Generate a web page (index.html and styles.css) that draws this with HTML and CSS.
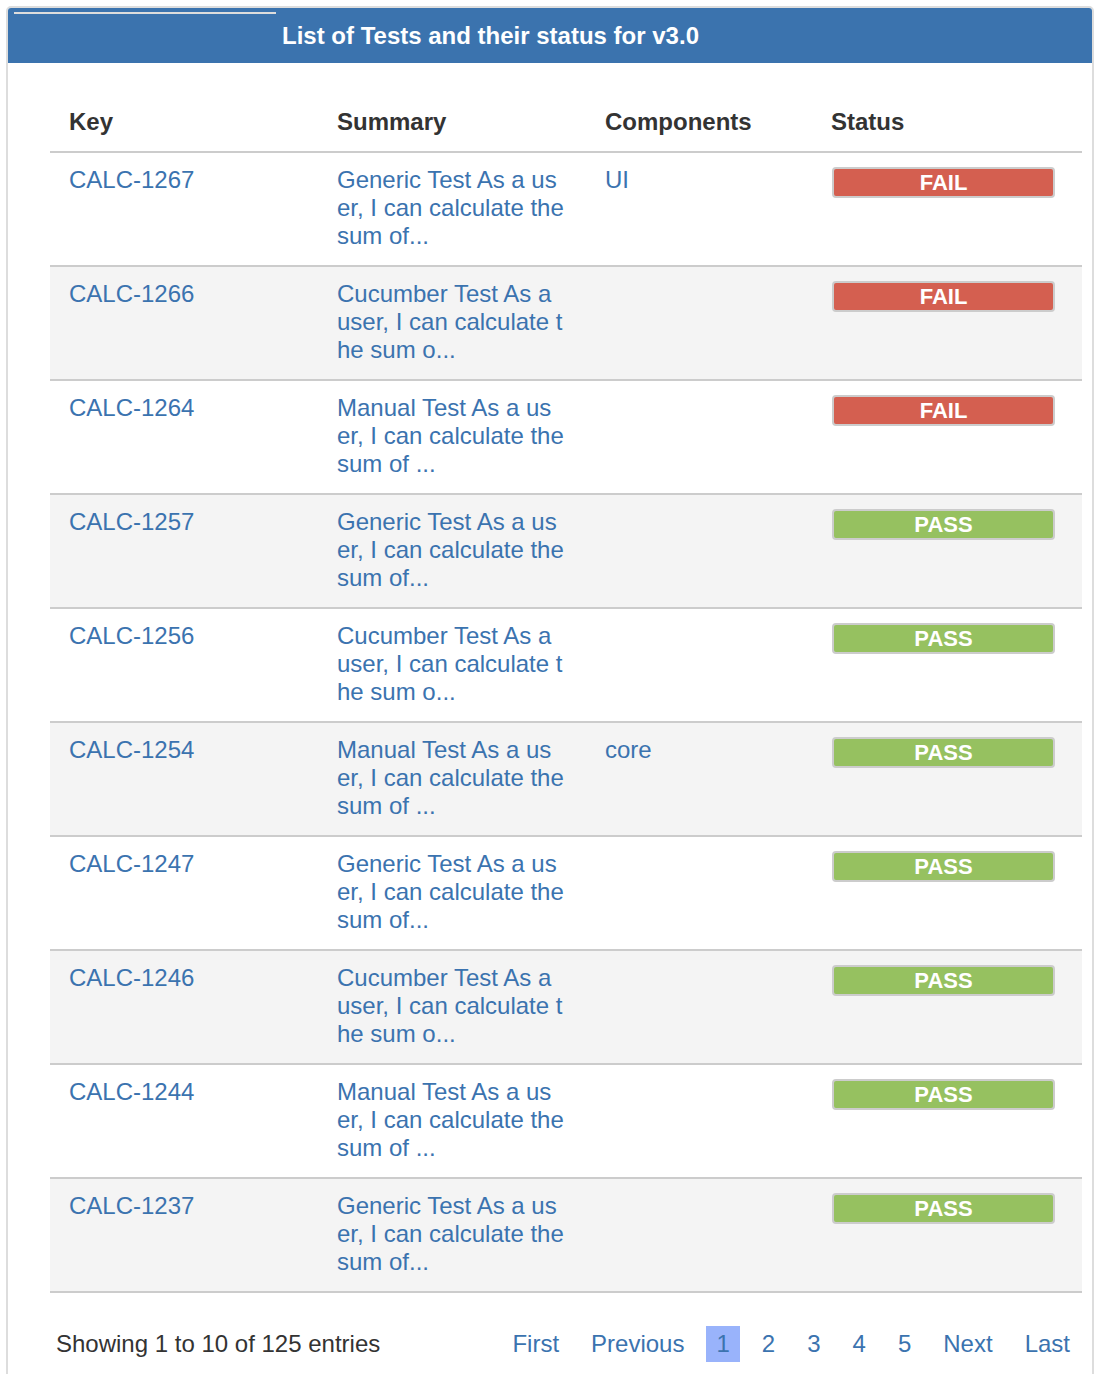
FILE: index.html
```html
<!DOCTYPE html>
<html lang="en">
<head>
<meta charset="utf-8">
<title>List of Tests and their status for v3.0</title>
<link rel="stylesheet" href="styles.css">
</head>
<body>
<div class="panel">
  <div class="panel-header">
    <span class="header-rule"></span>
    <h1 class="panel-title">List of Tests and their status for v3.0</h1>
  </div>
  <div class="panel-body">
    <table class="tests">
      <colgroup>
        <col class="col-key">
        <col class="col-summary">
        <col class="col-comp">
        <col class="col-status">
      </colgroup>
      <thead>
        <tr><th>Key</th><th>Summary</th><th>Components</th><th>Status</th></tr>
      </thead>
      <tbody>
        <tr><td><a href="#">CALC-1267</a></td><td class="summary"><a href="#">Generic Test As a user, I can calculate the sum of...</a></td><td><a href="#">UI</a></td><td><span class="badge fail">FAIL</span></td></tr>
        <tr><td><a href="#">CALC-1266</a></td><td class="summary"><a href="#">Cucumber Test As a user, I can calculate the sum o...</a></td><td></td><td><span class="badge fail">FAIL</span></td></tr>
        <tr><td><a href="#">CALC-1264</a></td><td class="summary"><a href="#">Manual Test As a user, I can calculate the sum of ...</a></td><td></td><td><span class="badge fail">FAIL</span></td></tr>
        <tr><td><a href="#">CALC-1257</a></td><td class="summary"><a href="#">Generic Test As a user, I can calculate the sum of...</a></td><td></td><td><span class="badge pass">PASS</span></td></tr>
        <tr><td><a href="#">CALC-1256</a></td><td class="summary"><a href="#">Cucumber Test As a user, I can calculate the sum o...</a></td><td></td><td><span class="badge pass">PASS</span></td></tr>
        <tr><td><a href="#">CALC-1254</a></td><td class="summary"><a href="#">Manual Test As a user, I can calculate the sum of ...</a></td><td><a href="#">core</a></td><td><span class="badge pass">PASS</span></td></tr>
        <tr><td><a href="#">CALC-1247</a></td><td class="summary"><a href="#">Generic Test As a user, I can calculate the sum of...</a></td><td></td><td><span class="badge pass">PASS</span></td></tr>
        <tr><td><a href="#">CALC-1246</a></td><td class="summary"><a href="#">Cucumber Test As a user, I can calculate the sum o...</a></td><td></td><td><span class="badge pass">PASS</span></td></tr>
        <tr><td><a href="#">CALC-1244</a></td><td class="summary"><a href="#">Manual Test As a user, I can calculate the sum of ...</a></td><td></td><td><span class="badge pass">PASS</span></td></tr>
        <tr><td><a href="#">CALC-1237</a></td><td class="summary"><a href="#">Generic Test As a user, I can calculate the sum of...</a></td><td></td><td><span class="badge pass">PASS</span></td></tr>
      </tbody>
    </table>
    <div class="table-footer">
      <div class="info">Showing 1 to 10 of 125 entries</div>
      <nav class="paginate">
        <a href="#">First</a>
        <a href="#">Previous</a>
        <a href="#" class="current">1</a>
        <a href="#">2</a>
        <a href="#">3</a>
        <a href="#">4</a>
        <a href="#">5</a>
        <a href="#">Next</a>
        <a href="#">Last</a>
      </nav>
    </div>
  </div>
</div>
</body>
</html>
```
FILE: styles.css
```css
html, body {
  margin: 0;
  padding: 0;
  background: #ffffff;
}

body {
  font-family: "Liberation Sans", Arial, Helvetica, sans-serif;
  font-size: 24px;
  line-height: 28px;
  color: #333333;
}

a {
  color: #3b73af;
  text-decoration: none;
}

.panel {
  margin: 6px 12px 0 6px;
  border: 2px solid #dddddd;
  border-radius: 5px;
  padding-bottom: 40px;
}

.panel-header {
  display: flex;
  align-items: center;
  height: 55px;
  background: #3b73ae;
  border-radius: 3px 3px 0 0;
}

.header-rule {
  align-self: flex-start;
  width: 262px;
  height: 2px;
  margin: 4px 0 0 6px;
  background: #dddddd;
}

.panel-title {
  margin: 0 0 0 6px;
  font-size: 24px;
  font-weight: bold;
  line-height: 28px;
  color: #ffffff;
}

.panel-body {
  padding: 30px 10px 0 42px;
}

.tests {
  width: 1032px;
  border-collapse: collapse;
  table-layout: fixed;
}

.col-key { width: 268px; }
.col-summary { width: 268px; }
.col-comp { width: 226px; }
.col-status { width: 270px; }

.tests th {
  text-align: left;
  font-weight: bold;
  color: #333333;
  padding: 15px 19px;
  border-bottom: 2px solid #cccccc;
}

.tests td {
  vertical-align: top;
  padding: 13px 19px 15px 19px;
  height: 84px;
  border-bottom: 2px solid #cccccc;
}

.tests tbody tr:nth-child(even) td {
  background: #f4f4f4;
}

.tests td.summary {
  word-break: break-all;
  padding-right: 22px;
}

.badge {
  display: block;
  box-sizing: border-box;
  width: 223px;
  height: 31px;
  margin: 1px 0 0 1px;
  border: 2px solid #cccccc;
  border-radius: 4px;
  color: #ffffff;
  font-size: 22px;
  font-weight: bold;
  line-height: 27px;
  text-align: center;
}

.badge.fail { background: #d45f50; }
.badge.pass { background: #96c160; }

.table-footer {
  display: flex;
  justify-content: space-between;
  align-items: center;
  margin-top: 33px;
}

.info {
  margin-left: 6px;
  color: #333333;
}

.paginate {
  display: flex;
  gap: 12px;
  margin-right: 2px;
}

.paginate a {
  display: block;
  padding: 4px 10px;
}

.paginate a.current {
  background: #99b3fb;
}
```
